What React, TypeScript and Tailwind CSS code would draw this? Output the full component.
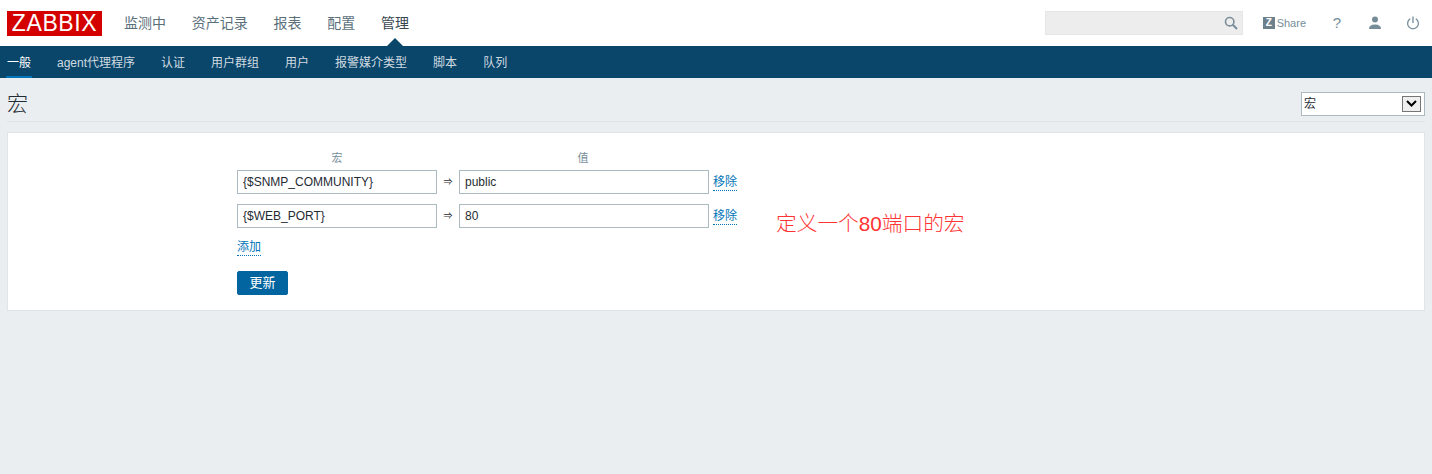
import React from "react";

const font = { fontFamily: '"Liberation Sans", "Noto Sans CJK SC", sans-serif' };
const top = ["监测中", "资产记录", "报表", "配置", "管理"];
const sub = ["一般", "agent代理程序", "认证", "用户群组", "用户", "报警媒介类型", "脚本", "队列"];

function Row({ k, v }: { k: string; v: string }) {
  return (
    <div className="flex items-center h-6">
      <div className="w-[200px] h-6 border border-[#acbbc2] px-[5px] text-[12px] leading-[22px] text-[#1f2c33]">{k}</div>
      <div className="w-[22px] text-center text-[9px] leading-6 text-[#1f2c33]">⇒</div>
      <div className="w-[250px] h-6 border border-[#acbbc2] px-[5px] text-[12px] leading-[22px] text-[#1f2c33]">{v}</div>
      <a className="ml-[4px] text-[12px] leading-[16px] text-[#0275b8] border-b border-dotted border-[#0275b8]">移除</a>
    </div>
  );
}

export default function App() {
  return (
    <div style={font} className="w-[1432px] h-[474px] bg-[#ebeef0] overflow-hidden">
      <header className="h-[46px] bg-white flex items-center pl-[7px] pr-[12px]">
        <div className="w-[95px] h-[25px] bg-[#d40000] text-white text-[23px] leading-[25px] text-center tracking-[0.6px] mr-[22px]">ZABBIX</div>
        <nav className="flex gap-[25.75px] text-[14px] text-[#5b6f7b]">
          {top.map((t, i) => (
            <span key={t} className={"relative " + (i === 4 ? "text-[#37474f]" : "")}>
              {t}
              {i === 4 && (
                <span className="absolute left-[6px] top-[25px] w-0 h-0 border-x-[8px] border-x-transparent border-b-[8px] border-b-[#0a466a]" />
              )}
            </span>
          ))}
        </nav>
        <div className="ml-auto flex items-center">
          <div className="w-[198px] h-6 bg-[#ededed] border border-[#e6e6e6] flex items-center justify-end pr-[4px] mr-5">
            <svg width="14" height="14" viewBox="0 0 14 14" fill="none" stroke="#7b8e99" strokeWidth="1.6">
              <circle cx="5.7" cy="5.7" r="4.2" />
              <path d="M8.8 8.8 13 13" strokeWidth="2" />
            </svg>
          </div>
          <div className="flex items-center w-[43px] mr-[25px]">
            <span className="w-[12px] h-[12px] bg-[#6d818d] text-white text-[10px] leading-[12px] font-bold text-center mr-[2px]">Z</span>
            <span className="text-[11px] text-[#768d99]">Share</span>
          </div>
          <span className="w-3 text-center text-[15px] leading-5 text-[#768d99] mr-[25px]">?</span>
          <svg className="mr-[24px]" width="14" height="14" viewBox="0 0 14 14" fill="#768d99">
            <circle cx="7" cy="3.6" r="3" />
            <path d="M1 13c0-3 2-4.6 6-4.6s6 1.600 6 4.600z" />
          </svg>
          <svg width="14" height="14" viewBox="0 0 14 14" fill="none" stroke="#768d99" strokeWidth="1.300">
            <path d="M7 .5v6.500" />
            <path d="M4.200 2.800a5.400 5.400 0 1 0 5.600 0" />
          </svg>
        </div>
      </header>

      <nav className="h-8 bg-[#0a466a] flex gap-[26px] pl-[7px] text-[12px] leading-[34px] text-[#d0dbe1]">
        {sub.map((s, i) => (
          <span key={s} className={i === 0 ? "relative h-8 text-white" : "h-8"}>
            {s}
            {i === 0 && <span className="absolute -left-px -right-px bottom-0 h-[2px] bg-[#0275b8]" />}
          </span>
        ))}
      </nav>

      <div className="mx-[7px] h-[44px] pt-[8px] border-b border-[#dfe4e7] flex items-center justify-between">
        <h1 className="text-[21px] font-light text-[#1f2c33] leading-none">宏</h1>
        <div className="w-[124px] h-6 bg-white border border-[#acbbc2] flex items-center justify-between pl-[2px] pr-[3px] text-[12px] text-[#1f2c33]">
          宏
          <span className="w-[19px] h-4 border border-[#767676] bg-[#efefef] flex items-center justify-center">
            <svg width="11" height="7" viewBox="0 0 11 7" fill="none" stroke="#000" strokeWidth="2">
              <path d="M1 1l4.500 4.500L10 1" />
            </svg>
          </span>
        </div>
      </div>

      <main className="ml-[7px] mt-[10px] w-[1418px] h-[179px] bg-white border border-[#dfe4e7] pl-[229px] pt-[17px] relative">
        <div className="flex h-[20px] text-[11px] leading-[16px] text-[#768d99]">
          <span className="w-[200px] text-center">宏</span>
          <span className="w-[22px]" />
          <span className="w-[248px] text-center">值</span>
        </div>
        <div className="flex flex-col gap-[10px]">
          <Row k="{$SNMP_COMMUNITY}" v="public" />
          <Row k="{$WEB_PORT}" v="80" />
        </div>
        <a className="inline-block mt-[11px] text-[12px] leading-[16px] text-[#0275b8] border-b border-dotted border-[#0275b8]">添加</a>
        <div className="mt-[12px]">
          <button className="w-[51px] h-6 bg-[#02659f] border border-[#02659f] rounded-[2px] text-white text-[13px] leading-[22px]">更新</button>
        </div>
        <span className="absolute left-[768px] top-[78px] text-[#ff3333] text-[20.7px] font-light leading-[26px] whitespace-nowrap">定义一个80端口的宏</span>
      </main>
    </div>
  );
}
